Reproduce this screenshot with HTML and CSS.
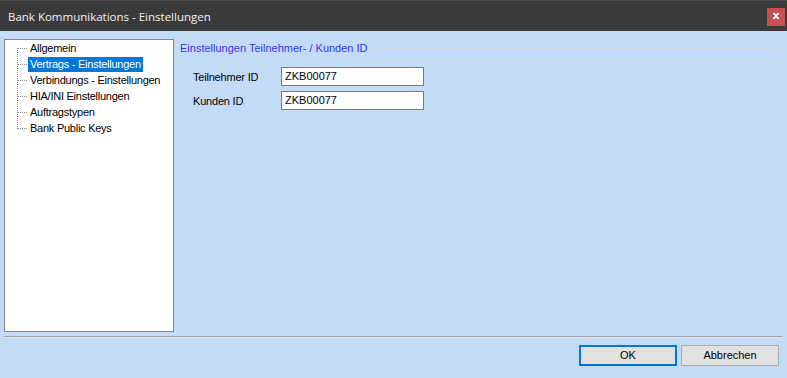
FILE: index.html
```html
<!DOCTYPE html>
<html>
<head>
<meta charset="utf-8">
<link rel="stylesheet" href="styles.css">
</head>
<body>
<div class="window">
  <div class="titlebar">
    <span class="title">Bank Kommunikations - Einstellungen</span>
    <span class="close">x</span>
  </div>
  <div class="client">
    <div class="main">
      <div class="tree">
        <ul class="nodes">
          <li><span class="lbl">Allgemein</span></li>
          <li><span class="lbl sel">Vertrags - Einstellungen</span></li>
          <li><span class="lbl">Verbindungs - Einstellungen</span></li>
          <li><span class="lbl">HIA/INI Einstellungen</span></li>
          <li><span class="lbl">Auftragstypen</span></li>
          <li class="last"><span class="lbl">Bank Public Keys</span></li>
        </ul>
      </div>
      <div class="panel">
        <div class="group-head">
          <span class="group-title">Einstellungen Teilnehmer- / Kunden ID</span>
          <span class="group-line"></span>
        </div>
        <div class="fields">
          <div class="row"><span class="flabel">Teilnehmer ID</span><span class="input">ZKB00077</span></div>
          <div class="row"><span class="flabel">Kunden ID</span><span class="input">ZKB00077</span></div>
        </div>
      </div>
    </div>
    <div class="sep"></div>
    <div class="buttons">
      <span class="btn default">OK</span>
      <span class="btn">Abbrechen</span>
    </div>
    <span class="grip"></span>
  </div>
</div>
</body>
</html>
```

FILE: styles.css
```css
html, body {
  margin: 0;
  padding: 0;
  width: 787px;
  height: 378px;
  overflow: hidden;
  background: #c4dbf8;
}
.window {
  width: 787px;
  height: 378px;
  display: flex;
  flex-direction: column;
  font-family: "Liberation Sans", Arial, sans-serif;
  font-size: 11px;
  color: #000;
}
.titlebar {
  height: 31px;
  background: #3a3a3a;
  border-top: 1px solid #4a4a4a;
  box-sizing: border-box;
  display: flex;
  align-items: center;
  justify-content: space-between;
  padding: 0 2px 0 8px;
}
.title {
  font-family: "Open Sans", "Noto Sans", sans-serif;
  font-size: 11.5px;
  color: #f2f2f2;
}
.close {
  width: 18px;
  height: 18px;
  background: #c75050;
  color: #fff;
  font-family: "DejaVu Sans", sans-serif;
  font-weight: bold;
  font-size: 11px;
  line-height: 16px;
  text-align: center;
  margin-top: 1px;
}
.client {
  flex: 1;
  position: relative;
  display: flex;
  flex-direction: column;
  background: #c4dbf8;
}
.main {
  display: flex;
  padding: 8px 0 0 4px;
}
.tree {
  width: 170px;
  height: 293px;
  box-sizing: border-box;
  border: 1px solid #828790;
  background: #fff;
  padding: 0;
}
.nodes {
  list-style: none;
  margin: 0;
  padding: 0 0 0 12px;
  letter-spacing: -0.25px;
}
.nodes li {
  height: 16px;
  line-height: 16px;
  position: relative;
  padding-left: 11px;
}
.nodes li::before {
  content: "";
  position: absolute;
  left: 0;
  top: 0;
  height: 16px;
  width: 1px;
  background-image: linear-gradient(to bottom, #8a8a8a 50%, transparent 50%);
  background-size: 1px 2px;
}
.nodes li::after {
  content: "";
  position: absolute;
  left: 1px;
  top: 8px;
  width: 10px;
  height: 1px;
  background-image: linear-gradient(to right, #8a8a8a 50%, transparent 50%);
  background-size: 2px 1px;
}
.nodes li:first-child::before {
  top: 8px;
  height: 8px;
}
.nodes li.last::before {
  height: 9px;
}
.lbl {
  display: inline-block;
  padding: 0 2px;
  line-height: 15px;
  vertical-align: top;
  margin-top: 1px;
}
.lbl.sel {
  background: #0078d7;
  color: #fff;
}
.panel {
  flex: 1;
  padding: 2px 10px 0 6px;
}
.group-head {
  display: flex;
  align-items: center;
  height: 14px;
}
.group-title {
  color: #3636e8;
  font-size: 11px;
  white-space: nowrap;
}
.group-line {
  flex: 1;
  height: 1px;
  background: #d5dbe3;
  margin-left: 2px;
  margin-top: 1px;
}
.fields {
  padding: 12px 0 0 13px;
  display: flex;
  flex-direction: column;
  gap: 5px;
}
.row {
  display: flex;
  align-items: center;
}
.flabel {
  width: 88px;
  letter-spacing: -0.2px;
}
.input {
  width: 143px;
  height: 19px;
  box-sizing: border-box;
  border: 1px solid #7a7a7a;
  background: #fff;
  padding: 0 3px;
  line-height: 17px;
  font-size: 11px;
}
.sep {
  margin: 4px 4px 0 4px;
  height: 1px;
  background: #a0a0a0;
  border-bottom: 1px solid #dde8f7;
}
.buttons {
  display: flex;
  justify-content: flex-end;
  gap: 4px;
  padding: 7px 8px 0 0;
}
.btn {
  width: 98px;
  height: 21px;
  box-sizing: border-box;
  border: 1px solid #adadad;
  background: #e1e1e1;
  text-align: center;
  line-height: 19px;
  font-size: 11px;
}
.btn.default {
  border: 2px solid #0078d7;
  line-height: 17px;
}
.grip {
  position: absolute;
  right: 2px;
  bottom: 2px;
  width: 6px;
  height: 6px;
  background-image: radial-gradient(circle, #b0b8c4 45%, transparent 50%);
  background-size: 2px 2px;
}
```
